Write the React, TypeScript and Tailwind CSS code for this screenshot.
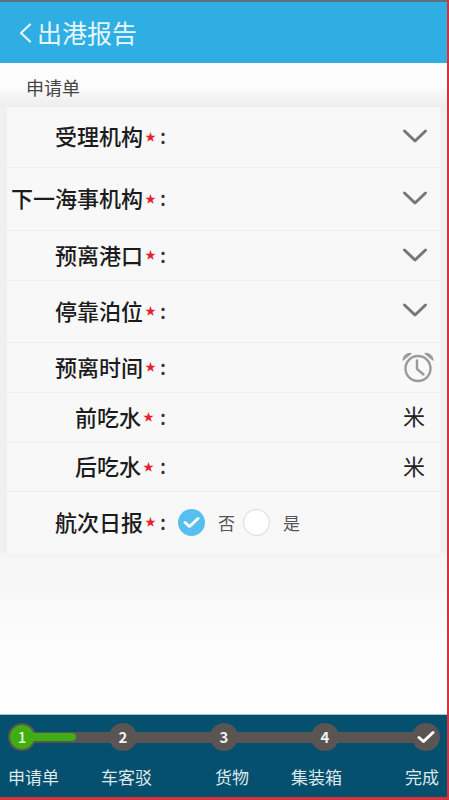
const font = { fontFamily: '"Noto Sans CJK SC", "Noto Sans", sans-serif' };

const Chevron = () => (
  <svg width="26" height="16" viewBox="0 0 26 16" fill="none" stroke="#777" strokeWidth="3" strokeLinecap="round" strokeLinejoin="round">
    <path d="M2.5 3 L13 13 L23.5 3" />
  </svg>
);

const Alarm = () => (
  <svg width="34" height="32" viewBox="0 0 34 32" fill="none" stroke="#9a9a9a" strokeWidth="2.4" strokeLinecap="round" strokeLinejoin="round">
    <circle cx="17" cy="17.5" r="12.5" />
    <path d="M16 9.5 V18 L22.5 23.5" />
    <path d="M2 9 C2.5 4.5 6 2 10 2.5 Z" fill="#9a9a9a" strokeWidth="1.2" />
    <path d="M32 9 C31.5 4.5 28 2 24 2.5 Z" fill="#9a9a9a" strokeWidth="1.2" />
  </svg>
);

interface RowProps {
  label: string;
  height: string;
  short?: boolean;
  right?: React.ReactNode;
  children?: React.ReactNode;
}

const Row = ({ label, height, short, right, children }: RowProps) => (
  <div className={`flex items-center border-b border-[#efefef] pb-[2px] last:border-b-0 ${height}`}>
    <div className={`mb-[2px] flex shrink-0 items-center justify-end ${short ? 'w-[134px]' : 'w-[136px]'}`}>
      <span className="text-[22px] leading-none font-medium whitespace-nowrap text-[#1c1c1c]">{label}</span>
    </div>
    <span className="ml-[2px] w-[11px] text-[11px] leading-none text-[#e8202a]">★</span>
    <span className={`text-[20px] leading-none font-medium text-[#333] ${short ? 'ml-[6px]' : 'ml-[4px]'}`}>:</span>
    <div className="flex flex-1 items-center">{children}</div>
    {right}
  </div>
);

const steps = [
  { label: '申请单', margin: 'ml-[8px]' },
  { label: '车客驳', margin: 'ml-[42px]' },
  { label: '货物', margin: 'ml-[63px]' },
  { label: '集装箱', margin: 'ml-[42px]' },
  { label: '完成', margin: 'ml-[63px]' },
];

const StepDot = ({ children, active }: { children: React.ReactNode; active?: boolean }) => (
  <div className="relative flex h-[28px] w-[28px] items-center justify-center rounded-full bg-[#5a5552]">
    {active ? (
      <div className="flex h-[24px] w-[24px] items-center justify-center rounded-full bg-[#3fae12] text-[15px] font-medium text-[#e8f5d8]">{children}</div>
    ) : (
      <span className="text-[15px] font-bold text-[#f0f0f0]">{children}</span>
    )}
  </div>
);

export default function App() {
  return (
    <div style={font} className="flex h-[800px] w-[449px] flex-col overflow-hidden border-r-2 border-b-[3px] border-[#d5333c] bg-white">
      <div className="h-[2px] shrink-0 bg-[#5f6f7c]" />
      <header className="flex h-[61px] shrink-0 items-center bg-[#2eaee2] pl-[19px] text-white">
        <svg width="13" height="20" viewBox="0 0 13 20" fill="none" stroke="#e6f6fc" strokeWidth="2.2" strokeLinecap="round" strokeLinejoin="round">
          <path d="M11 1.5 L2 10 L11 18.5" />
        </svg>
        <h1 className="ml-[5px] text-[25px] leading-none font-normal text-[#e6f6fc]">出港报告</h1>
      </header>

      <div className="flex flex-1 flex-col">
        <div className="flex h-[44px] shrink-0 items-center bg-gradient-to-b from-[#fbfbfb] via-[#fdfdfd] to-[#ededed] pt-[5px] pl-[26px] text-[18px] text-[#444]">申请单</div>
        <div className="shrink-0 bg-[#f0f0f0] px-[7px]">
          <div className="w-[433px] bg-[#f8f8f8]">
            <Row label="受理机构" height="h-[61px]" right={<div className="mr-[12px]"><Chevron /></div>} />
            <Row label="下一海事机构" height="h-[63px]" right={<div className="mr-[12px]"><Chevron /></div>} />
            <Row label="预离港口" height="h-[50px]" right={<div className="mr-[12px]"><Chevron /></div>} />
            <Row label="停靠泊位" height="h-[62px]" right={<div className="mr-[12px] mb-[2px]"><Chevron /></div>} />
            <Row label="预离时间" height="h-[50px]" right={<div className="mr-[5px]"><Alarm /></div>} />
            <Row label="前吃水" height="h-[50px]" short right={<span className="mr-[15px] mb-[3px] text-[22px] leading-none text-[#222]">米</span>} />
            <Row label="后吃水" height="h-[49px]" short right={<span className="mr-[15px] mb-[3px] text-[22px] leading-none text-[#222]">米</span>} />
            <Row label="航次日报" height="h-[61px]">
              <div className="mt-[2px] ml-[12px] flex items-center">
                <div className="flex h-[27px] w-[27px] items-center justify-center rounded-full bg-[#57bff0]">
                  <svg width="17" height="13" viewBox="0 0 17 13" fill="none" stroke="#fff" strokeWidth="3" strokeLinecap="round" strokeLinejoin="round">
                    <path d="M2 6.5 L6.5 10.5 L15 2.5" />
                  </svg>
                </div>
                <span className="ml-[13px] text-[17px] leading-none text-[#555]">否</span>
                <div className="ml-[8px] h-[27px] w-[27px] rounded-full border border-[#d8d8d8] bg-white" />
                <span className="ml-[13px] text-[17px] leading-none text-[#555]">是</span>
              </div>
            </Row>
          </div>
        </div>
        <div className="flex-1 bg-gradient-to-b from-[#f5f5f5] via-[#fbfbfb] to-white" />
      </div>

      <footer className="flex h-[83px] shrink-0 flex-col border-t border-[#a8c4d0] bg-[#04506e] pt-[8px]">
        <div className="relative mx-[8px] flex w-[432px] justify-between">
          <div className="absolute top-[9px] left-[14px] h-[11px] w-[404px] bg-[#5a5552]" />
          <StepDot active>1</StepDot>
          <StepDot>2</StepDot>
          <StepDot>3</StepDot>
          <StepDot>4</StepDot>
          <StepDot>
            <svg width="18" height="14" viewBox="0 0 18 14" fill="none" stroke="#fff" strokeWidth="3" strokeLinecap="round" strokeLinejoin="round">
              <path d="M2 7.5 L6.5 11.5 L16 2.5" />
            </svg>
          </StepDot>
          <div className="absolute top-[10px] left-[24px] h-[8px] w-[44px] rounded-r-full bg-[#3fae12]" />
        </div>
        <div className="mt-[14px] flex">
          {steps.map((step) => (
            <span key={step.label} className={`text-[17px] leading-[24px] whitespace-nowrap text-[#dfe8ec] ${step.margin}`}>
              {step.label}
            </span>
          ))}
        </div>
      </footer>
    </div>
  );
}
